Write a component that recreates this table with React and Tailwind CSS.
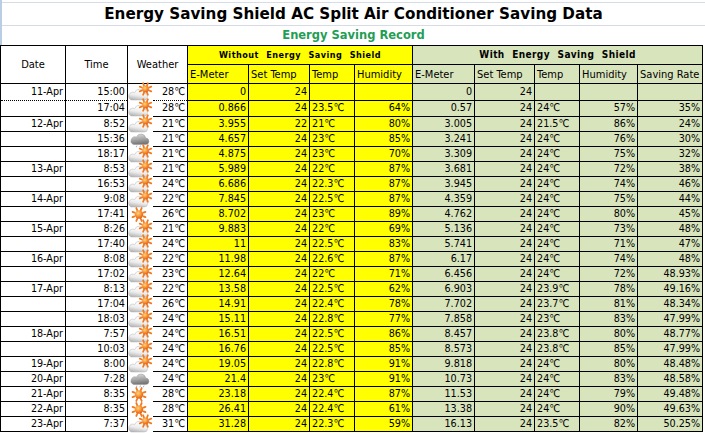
import React from 'react';

const PC = 'pc';
const RAIN = 'rain';
const SUN = 'sun';

// date, time, weather, outdoor temp, then without-shield (meter, set, temp, hum), with-shield (meter, set, temp, hum, rate)
const rows = [
  ['11-Apr', '15:00', PC, '28', '0', '24', '', '', '0', '24', '', '', ''],
  ['', '17:04', PC, '28', '0.866', '24', '23.5℃', '64%', '0.57', '24', '24℃', '57%', '35%'],
  ['12-Apr', '8:52', PC, '21', '3.955', '22', '21℃', '80%', '3.005', '24', '21.5℃', '86%', '24%'],
  ['', '15:36', RAIN, '21', '4.657', '24', '23℃', '85%', '3.241', '24', '24℃', '76%', '30%'],
  ['', '18:17', PC, '21', '4.875', '24', '23℃', '70%', '3.309', '24', '24℃', '75%', '32%'],
  ['13-Apr', '8:53', PC, '21', '5.989', '24', '22℃', '87%', '3.681', '24', '24℃', '72%', '38%'],
  ['', '16:53', PC, '24', '6.686', '24', '22.3℃', '87%', '3.945', '24', '24℃', '74%', '46%'],
  ['14-Apr', '9:08', PC, '22', '7.845', '24', '22.5℃', '87%', '4.359', '24', '24℃', '75%', '44%'],
  ['', '17:41', SUN, '26', '8.702', '24', '23℃', '89%', '4.762', '24', '24℃', '80%', '45%'],
  ['15-Apr', '8:26', PC, '21', '9.883', '24', '22℃', '69%', '5.136', '24', '24℃', '73%', '48%'],
  ['', '17:40', PC, '24', '11', '24', '22.5℃', '83%', '5.741', '24', '24℃', '71%', '47%'],
  ['16-Apr', '8:08', PC, '22', '11.98', '24', '22.6℃', '87%', '6.17', '24', '24℃', '74%', '48%'],
  ['', '17:02', PC, '23', '12.64', '24', '22℃', '71%', '6.456', '24', '24℃', '72%', '48.93%'],
  ['17-Apr', '8:13', PC, '22', '13.58', '24', '22.5℃', '62%', '6.903', '24', '23.9℃', '78%', '49.16%'],
  ['', '17:04', PC, '26', '14.91', '24', '22.4℃', '78%', '7.702', '24', '23.7℃', '81%', '48.34%'],
  ['', '18:03', PC, '24', '15.11', '24', '22.8℃', '77%', '7.858', '24', '23℃', '83%', '47.99%'],
  ['18-Apr', '7:57', PC, '24', '16.51', '24', '22.5℃', '86%', '8.457', '24', '23.8℃', '80%', '48.77%'],
  ['', '10:03', PC, '24', '16.76', '24', '22.5℃', '85%', '8.573', '24', '23.8℃', '85%', '47.99%'],
  ['19-Apr', '8:00', PC, '24', '19.05', '24', '22.8℃', '91%', '9.818', '24', '24℃', '80%', '48.48%'],
  ['20-Apr', '7:28', RAIN, '24', '21.4', '24', '23℃', '91%', '10.73', '24', '24℃', '83%', '48.58%'],
  ['21-Apr', '8:35', SUN, '28', '23.18', '24', '22.4℃', '87%', '11.53', '24', '24℃', '79%', '49.48%'],
  ['22-Apr', '8:35', SUN, '28', '26.41', '24', '22.4℃', '61%', '13.38', '24', '24℃', '90%', '49.63%'],
  ['23-Apr', '7:37', PC, '31', '31.28', '24', '22.3℃', '59%', '16.13', '24', '23.5℃', '82%', '50.25%'],
];

function Rays({ cx, cy, r }) {
  const out = [];
  for (let i = 0; i < 8; i++) {
    const a = (i * Math.PI) / 4 + Math.PI / 8;
    out.push(
      <line
        key={i}
        x1={cx + Math.cos(a) * (r + 0.6)}
        y1={cy + Math.sin(a) * (r + 0.6)}
        x2={cx + Math.cos(a) * (r + 2.8)}
        y2={cy + Math.sin(a) * (r + 2.8)}
        stroke="#f0791f"
        strokeWidth="1.8"
        strokeLinecap="round"
      />
    );
  }
  return <g>{out}</g>;
}

function SunDisc({ cx, cy, r, id }) {
  return (
    <g>
      <defs>
        <radialGradient id={id} cx="0.4" cy="0.35" r="0.7">
          <stop offset="0" stopColor="#ffd27a" />
          <stop offset="0.6" stopColor="#f58a2a" />
          <stop offset="1" stopColor="#d9541a" />
        </radialGradient>
      </defs>
      <Rays cx={cx} cy={cy} r={r} />
      <circle cx={cx} cy={cy} r={r} fill={`url(#${id})`} />
    </g>
  );
}

function WeatherIcon({ kind }) {
  if (kind === SUN) {
    return (
      <svg width="25" height="15" viewBox="0 0 25 15" className="block overflow-visible">
        <SunDisc cx={11} cy={7.5} r={4.2} id="sunA" />
      </svg>
    );
  }
  if (kind === RAIN) {
    return (
      <svg width="25" height="15" viewBox="0 0 25 15" className="block overflow-visible">
        <defs>
          <linearGradient id="rainC" x1="0" y1="0" x2="0.2" y2="1">
            <stop offset="0" stopColor="#e2e2e2" />
            <stop offset="0.55" stopColor="#a8a8a8" />
            <stop offset="1" stopColor="#767676" />
          </linearGradient>
        </defs>
        <path
          d="M5.5 12.5 h12 a3.3 3.3 0 0 0 0.2 -6.6 a4.8 4.8 0 0 0 -9.2 -0.8 a3.7 3.7 0 0 0 -3 7.4 z"
          fill="url(#rainC)"
          stroke="#8c8c8c"
          strokeWidth="0.4"
        />
        <path d="M9 13.5 l-0.7 1.8 M12.5 13.5 l-0.7 1.8 M16 13.5 l-0.7 1.8" stroke="#8fa3b5" strokeWidth="0.8" />
      </svg>
    );
  }
  return (
    <svg width="25" height="15" viewBox="0 0 25 15" className="block overflow-visible">
      <defs>
        <linearGradient id="cloudB" x1="0.3" y1="0" x2="0" y2="1">
          <stop offset="0" stopColor="#ffffff" />
          <stop offset="0.5" stopColor="#ececec" />
          <stop offset="1" stopColor="#a9a9a9" />
        </linearGradient>
      </defs>
      <path
        d="M3 15 h13 a3.4 3.4 0 0 0 0.3 -6.8 a5 5 0 0 0 -9.6 -0.7 a3.8 3.8 0 0 0 -3.7 7.5 z"
        fill="url(#cloudB)"
        stroke="#b4b4b4"
        strokeWidth="0.5"
      />
      <SunDisc cx={17.5} cy={4} r={3.4} id="sunB" />
    </svg>
  );
}

const YELLOW = 'bg-[#ffff00]';
const GREEN = 'bg-[#d8e4bc]';
const cell = 'border border-black px-[2px] whitespace-nowrap';

export default function App() {
  return (
    <div
      className="w-[705px] h-[433px] bg-white overflow-hidden text-black"
      style={{ fontFamily: '"DejaVu Sans Condensed", "Liberation Sans", sans-serif' }}
    >
      <div className="border-l-2 border-[#b9cde5]">
        <div className="h-[3px] border-b border-[#d5dce8]" />
        <div
          className="h-[23px] border-b border-[#d5dce8] flex items-center justify-center text-[15.2px] font-bold"
          style={{ fontFamily: '"DejaVu Sans", sans-serif' }}
        >
          Energy Saving Shield AC Split Air Conditioner Saving Data
        </div>
        <div
          className="h-[19px] flex items-center justify-center text-[11.5px] font-bold text-[#1f9e55]"
          style={{ fontFamily: '"DejaVu Sans", sans-serif' }}
        >
          Energy Saving Record
        </div>
      </div>

      <table className="table-fixed border-collapse w-[702px] text-[10.7px] leading-none">
        <colgroup>
          <col className="w-[65px]" />
          <col className="w-[62px]" />
          <col className="w-[25px]" />
          <col className="w-[35px]" />
          <col className="w-[61px]" />
          <col className="w-[61px]" />
          <col className="w-[45px]" />
          <col className="w-[58px]" />
          <col className="w-[62px]" />
          <col className="w-[60px]" />
          <col className="w-[45px]" />
          <col className="w-[58px]" />
          <col className="w-[65px]" />
        </colgroup>
        <thead>
          <tr className="h-[19px]">
            <th rowSpan={2} className={`${cell} font-normal text-[11px] text-center`}>Date</th>
            <th rowSpan={2} className={`${cell} font-normal text-[11px] text-center`}>Time</th>
            <th rowSpan={2} colSpan={2} className={`${cell} font-normal text-[11px] text-center`}>Weather</th>
            <th colSpan={4} className={`${cell} ${YELLOW} font-bold text-[9px] tracking-[0.5px] [word-spacing:4px] text-center`}>
              Without Energy Saving Shield
            </th>
            <th colSpan={5} className={`${cell} ${GREEN} font-bold text-[10px] tracking-[0.4px] [word-spacing:4px] text-center`}>
              With Energy Saving Shield
            </th>
          </tr>
          <tr className="h-[19px]">
            {['E-Meter', 'Set Temp', 'Temp', 'Humidity'].map((h) => (
              <th key={'y' + h} className={`${cell} ${YELLOW} font-normal text-[11px] text-left`}>{h}</th>
            ))}
            {['E-Meter', 'Set Temp', 'Temp', 'Humidity', 'Saving Rate'].map((h) => (
              <th key={'g' + h} className={`${cell} ${GREEN} font-normal text-[11px] text-left`}>{h}</th>
            ))}
          </tr>
        </thead>
        <tbody>
          {rows.map((r, i) => {
            const h = i === 0 ? 'h-[17px]' : i === 1 ? 'h-[16px]' : 'h-[15px]';
            const dot = i === 0 ? '[border-bottom-style:dotted]' : i === 1 ? 'border-t-0' : '';
            return (
              <tr key={i} className={h}>
                <td className={`${cell} ${dot} text-right`}>{r[0]}</td>
                <td className={`${cell} ${dot} text-right`}>{r[1]}</td>
                <td className="p-0 align-middle">
                  <WeatherIcon kind={r[2]} />
                </td>
                <td className={`border-y border-r border-black px-[2px] ${dot} text-right`}>{r[3]}℃</td>
                <td className={`${cell} ${YELLOW} text-right`}>{r[4]}</td>
                <td className={`${cell} ${YELLOW} text-right`}>{r[5]}</td>
                <td className={`${cell} ${YELLOW} text-left`}>{r[6]}</td>
                <td className={`${cell} ${YELLOW} text-right`}>{r[7]}</td>
                <td className={`${cell} ${GREEN} text-right`}>{r[8]}</td>
                <td className={`${cell} ${GREEN} text-right`}>{r[9]}</td>
                <td className={`${cell} ${GREEN} text-left`}>{r[10]}</td>
                <td className={`${cell} ${GREEN} text-right`}>{r[11]}</td>
                <td className={`${cell} ${GREEN} text-right`}>{r[12]}</td>
              </tr>
            );
          })}
        </tbody>
      </table>
    </div>
  );
}
